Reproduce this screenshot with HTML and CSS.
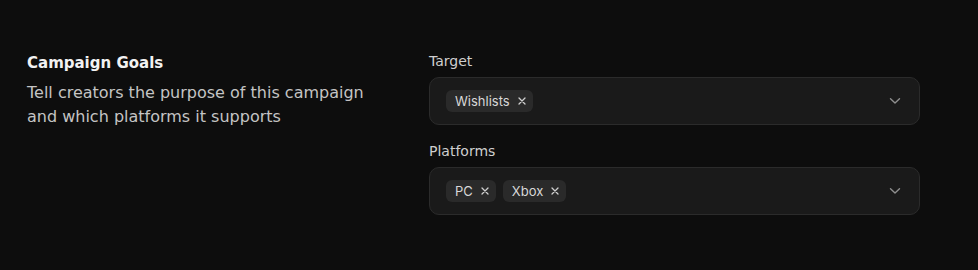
FILE: index.html
```html
<!DOCTYPE html>
<html>
<head>
<meta charset="utf-8">
<link rel="stylesheet" href="styles.css">
</head>
<body>
<section class="row">
  <div class="intro">
    <h2 class="title">Campaign Goals</h2>
    <p class="desc">Tell creators the purpose of this campaign and which platforms it supports</p>
  </div>
  <div class="fields">
    <div class="field">
      <label class="label">Target</label>
      <div class="select">
        <div class="chips">
          <span class="chip">Wishlists <svg class="x" width="8" height="8" viewBox="0 0 8 8"><path d="M1 1 L7 7 M7 1 L1 7" stroke="#cfcfcf" stroke-width="1.3" stroke-linecap="round"/></svg></span>
        </div>
        <svg class="chev" width="12" height="8" viewBox="0 0 12 8"><path d="M1.5 1.8 L6 6 L10.5 1.8" fill="none" stroke="#8f8f8f" stroke-width="1.4" stroke-linecap="round" stroke-linejoin="round"/></svg>
      </div>
    </div>
    <div class="field">
      <label class="label">Platforms</label>
      <div class="select">
        <div class="chips">
          <span class="chip">PC <svg class="x" width="8" height="8" viewBox="0 0 8 8"><path d="M1 1 L7 7 M7 1 L1 7" stroke="#cfcfcf" stroke-width="1.3" stroke-linecap="round"/></svg></span>
          <span class="chip">Xbox <svg class="x" width="8" height="8" viewBox="0 0 8 8"><path d="M1 1 L7 7 M7 1 L1 7" stroke="#cfcfcf" stroke-width="1.3" stroke-linecap="round"/></svg></span>
        </div>
        <svg class="chev" width="12" height="8" viewBox="0 0 12 8"><path d="M1.5 1.8 L6 6 L10.5 1.8" fill="none" stroke="#8f8f8f" stroke-width="1.4" stroke-linecap="round" stroke-linejoin="round"/></svg>
      </div>
    </div>
  </div>
</section>
</body>
</html>
```
FILE: styles.css
```css
html, body {
  margin: 0;
  padding: 0;
  background: #0d0d0d;
}
body {
  font-family: "DejaVu Sans", "Noto Sans", sans-serif;
  color: #e6e6e6;
  width: 978px;
  height: 270px;
  overflow: hidden;
}
.row {
  display: flex;
  padding: 51px 58px 0 27px;
}
.intro {
  width: 402px;
  flex: none;
}
.title {
  margin: 0;
  font-size: 15px;
  font-weight: 600;
  line-height: 24px;
  color: #f2f2f2;
}
.desc {
  margin: 6px 0 0;
  font-size: 16px;
  line-height: 24px;
  color: #c4c4c4;
  width: 352px;
}
.fields {
  flex: 1;
  display: flex;
  flex-direction: column;
  gap: 16px;
}
.field {
  display: flex;
  flex-direction: column;
  gap: 6px;
}
.label {
  font-size: 14px;
  line-height: 20px;
  color: #cfcfcf;
}
.select {
  height: 46px;
  border: 1px solid #2b2b2b;
  border-radius: 10px;
  background: #1a1a1a;
  display: flex;
  align-items: center;
  justify-content: space-between;
  padding: 0 18px 0 16px;
}
.chips {
  display: flex;
  gap: 7px;
}
.chip {
  display: inline-flex;
  align-items: center;
  height: 22px;
  padding: 0 7px 0 9px;
  background: #2a2a2a;
  border-radius: 6px;
  font-family: "Inter", sans-serif;
  font-size: 13px;
  color: #d8d8d8;
}
.x {
  display: block;
  margin-left: 8px;
}
.chev {
  display: block;
}
```
